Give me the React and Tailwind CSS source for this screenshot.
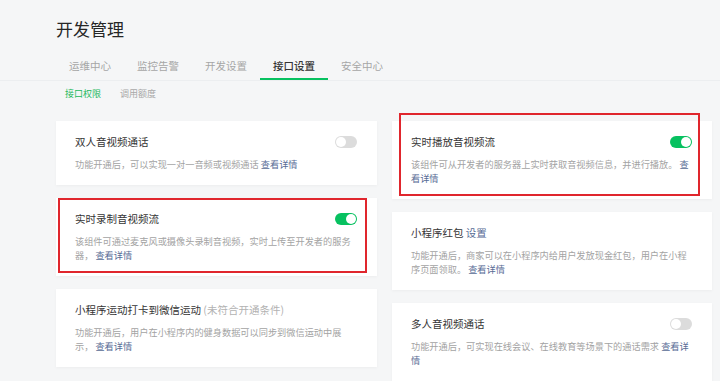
import React from "react";

const TABS = ["运维中心", "监控告警", "开发设置", "接口设置", "安全中心"];

const LEFT = [
  { title: "双人音视频通话", desc: "功能开通后，可以实现一对一音频或视频通话", link: "查看详情", toggle: "off" },
  { title: "实时录制音视频流", desc: "该组件可通过麦克风或摄像头录制音视频，实时上传至开发者的服务器，", link: "查看详情", toggle: "on", mark: "left" },
  { title: "小程序运动打卡到微信运动", note: "(未符合开通条件)", desc: "功能开通后，用户在小程序内的健身数据可以同步到微信运动中展示，", link: "查看详情" },
];

const RIGHT = [
  { title: "实时播放音视频流", desc: "该组件可从开发者的服务器上实时获取音视频信息，并进行播放。", link: "查看详情", toggle: "on", mark: "right" },
  { title: "小程序红包", titleLink: "设置", desc: "功能开通后，商家可以在小程序内给用户发放现金红包，用户在小程序页面领取。", link: "查看详情" },
  { title: "多人音视频通话", desc: "功能开通后，可实现在线会议、在线教育等场景下的通话需求", link: "查看详情", toggle: "off", narrow: true },
];

function Toggle({ on }) {
  return on ? (
    <span className="flex h-[12px] w-[22px] items-center justify-end rounded-full bg-[#07c160] pr-[1px]">
      <span className="h-[10px] w-[10px] rounded-full bg-white" />
    </span>
  ) : (
    <span className="flex h-[12px] w-[22px] items-center rounded-full bg-[#dcdcdc] pl-[1px]">
      <span className="h-[10px] w-[10px] rounded-full bg-white" />
    </span>
  );
}

function Card({ item }) {
  return (
    <div className="relative bg-white pl-[19px] pr-[19px] pt-[13px] pb-[14px] shadow-[0_1px_3px_rgba(0,0,0,0.04)]">
      <div className="flex h-[15px] items-center justify-between">
        <p className="text-[10.5px] leading-[15px] text-[#353535]">
          {item.title}
          {item.note && <span className="text-[#b2b2b2]"> {item.note}</span>}
          {item.titleLink && <span className="text-[#576b95]"> {item.titleLink}</span>}
        </p>
        {item.toggle && <span className="mr-[1px]"><Toggle on={item.toggle === "on"} /></span>}
      </div>
      <p className={`mt-[8px] text-[9.2px] leading-[14px] text-[#a3a3a3] ${item.narrow ? "pr-[3px]" : ""}`}>
        {item.desc} <span className="text-[#576b95]">{item.link}</span>
      </p>
      {item.mark === "left" && (
        <div className="pointer-events-none absolute top-0 bottom-[3px] left-[2px] right-[10px] border-2 border-[#e0262d]" />
      )}
      {item.mark === "right" && (
        <div className="pointer-events-none absolute top-[-8px] bottom-[3px] left-[7px] right-[12px] border-2 border-[#e0262d]" />
      )}
    </div>
  );
}

export default function App() {
  return (
    <div className="h-[381px] w-[720px] overflow-hidden bg-[#f5f6f7] pt-[18px] font-['Noto_Sans_CJK_SC','Noto_Sans',sans-serif]">
      <h1 className="pl-[56px] text-[17px] leading-[22px] text-[#262626]">开发管理</h1>

      <div className="mt-[19px] flex border-b border-[#eceef0] pl-[56px]">
        {TABS.map((t) => (
          <span
            key={t}
            className={`px-[13px] pb-[5px] text-[10.5px] leading-[14px] ${
              t === "接口设置"
                ? "border-b-2 border-[#07c160] font-medium text-[#353535]"
                : "border-b-2 border-transparent text-[#a6a6a6]"
            }`}
          >
            {t}
          </span>
        ))}
      </div>

      <div className="flex gap-[19px] pl-[65px] pt-[6px] text-[9px] leading-[13px]">
        <span className="text-[#22b85b]">接口权限</span>
        <span className="text-[#a8a8a8]">调用额度</span>
      </div>

      <div className="mt-[21px] flex gap-[15px] pl-[56px] pr-[8px]">
        <div className="flex w-[321px] flex-col gap-[13px]">
          {LEFT.map((c) => <Card key={c.title} item={c} />)}
        </div>
        <div className="flex w-[320px] flex-col gap-[13px]">
          {RIGHT.map((c) => <Card key={c.title} item={c} />)}
        </div>
      </div>
    </div>
  );
}
